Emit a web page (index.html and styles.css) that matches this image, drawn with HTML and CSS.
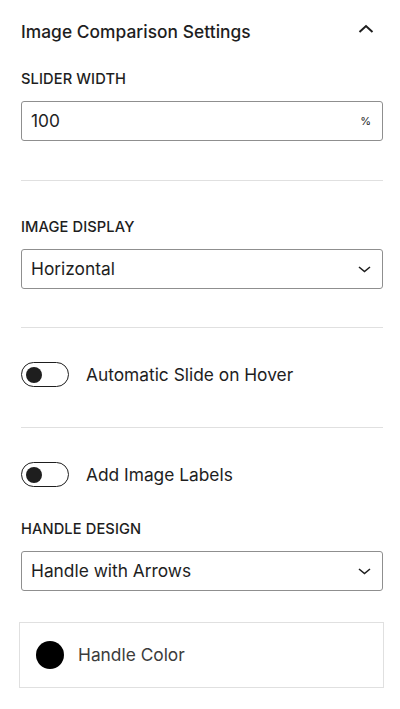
FILE: index.html
```html
<!DOCTYPE html>
<html lang="en">
<head>
  <meta charset="UTF-8">
  <meta name="viewport" content="width=device-width, initial-scale=1.0">
  <title>Image Comparison Settings</title>
  <link rel="stylesheet" href="styles.css">
</head>
<body>
  <div class="panel">
    <!-- 面板标题 -->
    <div class="panel-head">
      <span class="panel-title">Image Comparison Settings</span>
      <svg class="chev-up" width="16" height="10" viewBox="0 0 16 10">
        <path d="M1.5 8 L8 2 L14.5 8" fill="none" stroke="#1e1e1e" stroke-width="2"/>
      </svg>
    </div>

    <label class="field-label first">Slider Width</label>
    <div class="field">
      <span class="field-value">100</span>
      <span class="suffix">%</span>
    </div>

    <div class="divider div-1"></div>

    <label class="field-label">Image Display</label>
    <div class="field">
      <span class="field-value">Horizontal</span>
      <svg class="chev-down" width="13" height="7" viewBox="0 0 13 7">
        <path d="M1 1 L6.5 5.5 L12 1" fill="none" stroke="#1e1e1e" stroke-width="1.6"/>
      </svg>
    </div>

    <div class="divider div-2"></div>

    <div class="toggle-row">
      <span class="toggle"><span class="knob"></span></span>
      <span class="toggle-text">Automatic Slide on Hover</span>
    </div>

    <div class="divider div-3"></div>

    <div class="toggle-row">
      <span class="toggle"><span class="knob"></span></span>
      <span class="toggle-text">Add Image Labels</span>
    </div>

    <label class="field-label after-toggle">Handle Design</label>
    <div class="field">
      <span class="field-value">Handle with Arrows</span>
      <svg class="chev-down" width="13" height="7" viewBox="0 0 13 7">
        <path d="M1 1 L6.5 5.5 L12 1" fill="none" stroke="#1e1e1e" stroke-width="1.6"/>
      </svg>
    </div>

    <!-- 颜色选择 -->
    <div class="color-box">
      <span class="swatch"></span>
      <span class="color-name">Handle Color</span>
    </div>
  </div>
</body>
</html>
```

FILE: styles.css
```css
/* 清除默认样式 */
*{
  margin: 0;
  padding: 0;
  box-sizing: border-box;
}
body{
  background-color: #fff;
  color: #1e1e1e;
  font-family: Inter, "Noto Sans", sans-serif;
  font-size: 17.33px;
}
.panel{
  width: 400px;
  padding: 0 17px 0 21px;
}
/* 标题 */
.panel-head{
  height: 64px;
  display: flex;
  align-items: center;
  justify-content: space-between;
}
.panel-title{
  font-weight: 500;
  line-height: 22px;
  padding-bottom: 1px;
  letter-spacing: 0.05px;
}
.chev-up{
  margin-right: 9px;
  margin-top: -7px;
}
/* 小标题 */
.field-label{
  display: block;
  font-size: 14.67px;
  font-weight: 500;
  text-transform: uppercase;
  line-height: 18px;
  margin-bottom: 13px;
  letter-spacing: 0.1px;
}
.field-label.first{
  margin-top: 6px;
}
.field-label.after-toggle{
  margin-top: 33px;
}
/* 输入框 */
.field{
  height: 40px;
  border: 1px solid #8f8f8f;
  border-radius: 3px;
  display: flex;
  align-items: center;
  justify-content: space-between;
  padding: 0 11px 0 9px;
}
.field-value{
  line-height: 22px;
}
.suffix{
  font-size: 11px;
}
/* 分割线 */
.divider{
  height: 1px;
  background-color: #e0e0e0;
}
.div-1{
  margin: 39px 0 37px;
}
.div-2{
  margin: 38px 0 34px;
}
.div-3{
  margin: 40px 0 34px;
}
/* 开关 */
.toggle-row{
  display: flex;
  align-items: center;
}
.toggle{
  width: 48px;
  height: 25px;
  border: 1.5px solid #1e1e1e;
  border-radius: 13px;
  display: flex;
  align-items: center;
  padding-left: 3.5px;
}
.knob{
  width: 16px;
  height: 16px;
  border-radius: 50%;
  background-color: #1e1e1e;
}
.toggle-text{
  margin-left: 17px;
  line-height: 22px;
}
/* 颜色框 */
.color-box{
  height: 66px;
  margin: 31px -0.5px 0 -2px;
  border: 1px solid #e0e0e0;
  display: flex;
  align-items: center;
  padding-left: 16px;
}
.swatch{
  width: 28px;
  height: 28px;
  border-radius: 50%;
  background-color: #000;
}
.color-name{
  margin-left: 14px;
  color: #3c3c3c;
  line-height: 22px;
}
```
